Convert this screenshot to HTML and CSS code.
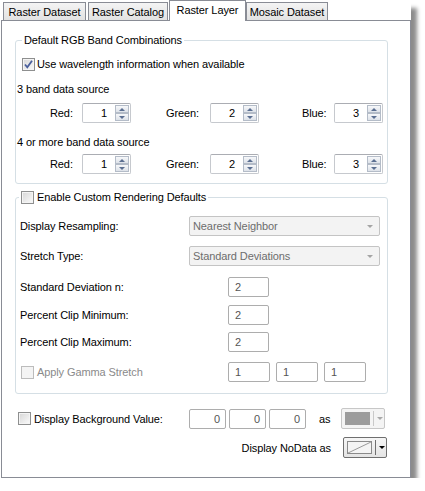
FILE: index.html
```html
<!DOCTYPE html>
<html>
<head>
<meta charset="utf-8">
<link rel="stylesheet" href="styles.css">
</head>
<body>
<div class="window">
  <div class="tabs">
    <div class="tab t1">Raster Dataset</div>
    <div class="tab t2">Raster Catalog</div>
    <div class="tab active">Raster Layer</div>
    <div class="tab t4">Mosaic Dataset</div>
  </div>
  <div class="panel">
    <div class="group g1">
      <div class="legend">Default RGB Band Combinations</div>
      <div class="cbrow">
        <span class="cb"><svg width="11" height="11" viewBox="0 0 11 11"><path d="M2 5.5 L4.3 8.3 L9 1.8" fill="none" stroke="#4a5f9c" stroke-width="1.8"/></svg></span>
        <span>Use wavelength information when available</span>
      </div>
      <div class="sub">3 band data source</div>
      <div class="bands">
        <span>Red:</span>
        <div class="spin"><span class="val">1</span><span class="spbtns"><i class="up"></i><i class="dn"></i></span></div>
        <span></span>
        <span>Green:</span>
        <div class="spin"><span class="val">2</span><span class="spbtns"><i class="up"></i><i class="dn"></i></span></div>
        <span></span>
        <span>Blue:</span>
        <div class="spin"><span class="val">3</span><span class="spbtns"><i class="up"></i><i class="dn"></i></span></div>
      </div>
      <div class="sub sub2">4 or more band data source</div>
      <div class="bands bands2">
        <span>Red:</span>
        <div class="spin"><span class="val">1</span><span class="spbtns"><i class="up"></i><i class="dn"></i></span></div>
        <span></span>
        <span>Green:</span>
        <div class="spin"><span class="val">2</span><span class="spbtns"><i class="up"></i><i class="dn"></i></span></div>
        <span></span>
        <span>Blue:</span>
        <div class="spin"><span class="val">3</span><span class="spbtns"><i class="up"></i><i class="dn"></i></span></div>
      </div>
    </div>

    <div class="group g2">
      <div class="legend legend2"><span class="cb"></span><span>Enable Custom Rendering Defaults</span></div>
      <div class="frow">
        <span class="flabel">Display Resampling:</span>
        <div class="dd"><span>Nearest Neighbor</span><i class="ddarrow"></i></div>
      </div>
      <div class="frow r2">
        <span class="flabel">Stretch Type:</span>
        <div class="dd"><span>Standard Deviations</span><i class="ddarrow"></i></div>
      </div>
      <div class="frow r3">
        <span class="flabel wide">Standard Deviation n:</span>
        <div class="tb">2</div>
      </div>
      <div class="frow r4">
        <span class="flabel wide">Percent Clip Minimum:</span>
        <div class="tb">2</div>
      </div>
      <div class="frow r5">
        <span class="flabel wide">Percent Clip Maximum:</span>
        <div class="tb">2</div>
      </div>
      <div class="frow r6">
        <span class="flabel wide gamma"><span class="cb dis"></span><span>Apply Gamma Stretch</span></span>
        <div class="gins">
          <div class="tb g">1</div>
          <div class="tb g">1</div>
          <div class="tb g">1</div>
        </div>
      </div>
    </div>

    <div class="bgrow">
      <span class="bglabel"><span class="cb"></span><span>Display Background Value:</span></span>
      <div class="bgins">
        <div class="tb num">0</div>
        <div class="tb num">0</div>
        <div class="tb num">0</div>
      </div>
      <span class="as">as</span>
      <div class="cbtn dis">
        <span class="swatch"></span><span class="sep"></span><i class="carrow"></i>
      </div>
    </div>
    <div class="ndrow">
      <span class="ndlabel">Display NoData as</span>
      <div class="cbtn nd">
        <span class="ndswatch"><svg width="25" height="13" viewBox="0 0 25 13"><rect x="0.5" y="0.5" width="24" height="12" fill="#f4f4f4" stroke="#8a8a8a"/><path d="M1 12 L24 1" stroke="#9a9a9a" stroke-width="1"/></svg></span><span class="sep"></span><i class="carrow"></i>
      </div>
    </div>
  </div>
</div>
</body>
</html>
```

FILE: styles.css
```css
html, body {
  margin: 0;
  background: #fff;
}
body {
  font-family: "Liberation Sans", Arial, sans-serif;
  font-size: 11px;
  letter-spacing: -0.1px;
  color: #000;
}
.window {
  margin-left: 1px;
  width: 410px;
  background: #fff;
  box-shadow: 7px 7px 4px -1px rgba(0, 0, 0, 0.45);
}
.tabs {
  display: flex;
  align-items: flex-end;
  height: 20px;
  padding-left: 2px;
}
.tab {
  box-sizing: border-box;
  height: 18px;
  border: 1px solid #898c95;
  border-bottom: 0;
  background: linear-gradient(#f4f4f4, #e2e2e2);
  display: flex;
  align-items: center;
  justify-content: center;
  padding-top: 1px;
}
.t1 { width: 83px; margin-right: 2px; }
.t2 { width: 80px; margin-right: 1px; }
.active {
  width: 77px;
  height: 21px;
  margin-bottom: -1px;
  background: #fff;
  position: relative;
  z-index: 1;
  align-items: flex-start;
  padding-top: 3px;
}
.t4 { width: 82px; }

.panel {
  border: 1px solid #898c95;
  padding: 19px 0 19px 13px;
}
.group {
  position: relative;
  width: 373px;
  box-sizing: border-box;
  border: 1px solid #d5dfe5;
  border-radius: 3px;
}
.legend {
  position: absolute;
  top: -7px;
  left: 6px;
  background: #fff;
  padding: 0 2px;
  line-height: 13px;
  display: flex;
  align-items: center;
  gap: 3px;
}
.g1 {
  padding: 16px 0 9px 0;
}
.cbrow {
  display: flex;
  align-items: center;
  height: 14px;
  gap: 2px;
  padding-left: 6px;
}
.cb {
  width: 13px;
  height: 13px;
  box-sizing: border-box;
  border: 1px solid #8e8f8f;
  background: linear-gradient(135deg, #d6d6d6, #fbfbfb);
  box-shadow: inset 0 0 0 1px #f4f4f4;
  display: inline-flex;
  align-items: center;
  justify-content: center;
  flex: none;
}
.cb svg { display: block; }
.cb.dis {
  border-color: #bcbcbc;
  background: #f4f4f4;
}
.sub {
  height: 14px;
  line-height: 14px;
  margin-top: 11px;
  padding-left: 1px;
}
.sub2 { margin-top: 12px; }
.bands {
  display: grid;
  grid-template-columns: 32px 49px 35px 44px 49px 43px 32px 49px;
  align-items: center;
  height: 20px;
  margin-top: 7px;
  padding-left: 34px;
}
.bands2 { margin-top: 5px; }
.spin {
  display: flex;
  height: 20px;
  box-sizing: border-box;
  border: 1px solid #c6c9ce;
  border-top-color: #abadb3;
  border-radius: 2px;
  background: #fff;
}
.val {
  flex: 1;
  text-align: right;
  padding-right: 8px;
  line-height: 18px;
}
.spbtns {
  width: 15px;
  display: flex;
  flex-direction: column;
  padding: 1px 1px 1px 0;
  box-sizing: border-box;
}
.spbtns i {
  flex: 1;
  box-sizing: border-box;
  border: 1px solid #b4bcc8;
  background: linear-gradient(#f7f8fa, #dde2e9);
  display: flex;
  align-items: center;
  justify-content: center;
}
.spbtns i::after {
  content: "";
  border-left: 3px solid transparent;
  border-right: 3px solid transparent;
}
.spbtns i.up::after { border-bottom: 3px solid #5b6f91; }
.spbtns i.dn::after { border-top: 3px solid #5b6f91; }

.g2 {
  margin-top: 13px;
  padding: 18px 0 11px 4px;
}
.legend2 {
  left: 3px;
}
.frow {
  display: flex;
  align-items: center;
  height: 20px;
}
.r2 { margin-top: 10px; }
.r3 { margin-top: 11px; }
.r4 { margin-top: 8px; }
.r5 { margin-top: 7px; }
.r6 { margin-top: 10px; }
.flabel {
  width: 169px;
  flex: none;
}
.flabel.wide { width: 208px; }
.gamma {
  display: flex;
  align-items: center;
  gap: 3px;
  color: #8a8a8a;
}
.gamma .cb { margin-left: 1px; }
.dd {
  width: 191px;
  height: 20px;
  box-sizing: border-box;
  border: 1px solid #c4c4c4;
  border-radius: 2px;
  background: #f3f3f3;
  color: #6d6d6d;
  display: flex;
  align-items: center;
  justify-content: space-between;
  padding: 0 6px 0 3px;
}
.ddarrow {
  border-left: 3px solid transparent;
  border-right: 3px solid transparent;
  border-top: 3px solid #a4a4a4;
}
.tb {
  width: 41px;
  height: 20px;
  box-sizing: border-box;
  border: 1px solid #adadad;
  border-radius: 2px;
  background: #fff;
  color: #555;
  padding-left: 6px;
  line-height: 18px;
}
.gins {
  display: flex;
  gap: 6px;
}
.tb.g { width: 42px; }

.bgrow {
  display: flex;
  align-items: center;
  height: 21px;
  margin-top: 14px;
  padding-left: 3px;
}
.bglabel {
  width: 171px;
  flex: none;
  display: flex;
  align-items: center;
  gap: 3px;
}
.bgins {
  display: flex;
  gap: 3px;
}
.tb.num {
  width: 37px;
  text-align: right;
  padding: 0 5px 0 0;
}
.as {
  margin-left: 13px;
  margin-right: 11px;
}
.cbtn {
  width: 44px;
  height: 21px;
  box-sizing: border-box;
  border: 1px solid #c7c7c7;
  border-radius: 2px;
  background: #f4f4f4;
  display: flex;
  align-items: center;
  padding-left: 3px;
}
.swatch {
  width: 25px;
  height: 13px;
  background: #9c9c9c;
  flex: none;
}
.sep {
  width: 1px;
  height: 15px;
  background: #c9c9c9;
  margin-left: 3px;
  flex: none;
}
.carrow {
  margin-left: 3px;
  border-left: 3px solid transparent;
  border-right: 3px solid transparent;
  border-top: 3px solid #a8a8a8;
}
.ndrow {
  display: flex;
  justify-content: flex-end;
  align-items: center;
  width: 373px;
  box-sizing: border-box;
  padding-right: 1px;
  height: 21px;
  margin-top: 8px;
}
.ndlabel { margin-right: 12px; }
.cbtn.nd {
  border-color: #6f6f6f;
  background: linear-gradient(#f6f6f6, #e4e4e4);
}
.ndswatch { display: flex; flex: none; }
.ndswatch svg { display: block; }
.nd .sep { background: #6f6f6f; }
.nd .carrow { border-top-color: #000; }
```
